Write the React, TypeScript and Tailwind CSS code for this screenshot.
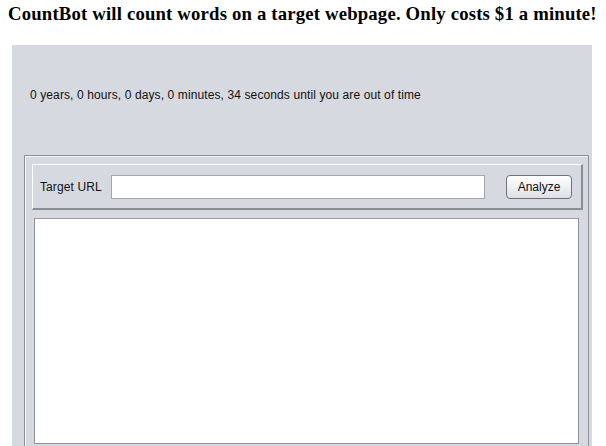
export default function App() {
  return (
    <div className="w-[606px] h-[446px] overflow-hidden bg-white">
      <h1
        className="pl-[8px] pt-[3px] h-[45px] leading-[22px] text-[18.72px] tracking-[0.18px] font-bold text-black whitespace-nowrap"
        style={{ fontFamily: '"Liberation Serif", "Times New Roman", serif' }}
      >
        CountBot will count words on a target webpage. Only costs $1 a minute!
      </h1>
      <div
        className="ml-[12px] w-[580px] h-[401px] bg-[#d6d9df] flex flex-col text-[12px] text-[#111]"
        style={{ fontFamily: '"Liberation Sans", Arial, sans-serif' }}
      >
        <p className="pl-[18px] pt-[43px] leading-[14px] h-[110px] tracking-[0.11px] whitespace-nowrap">
          0 years, 0 hours, 0 days, 0 minutes, 34 seconds until you are out of time
        </p>
        <div className="ml-[12px] w-[565px] flex-1 border-t border-l border-r border-[#8e9197] shadow-[inset_1px_1px_0_#f4f5f7] pl-[7px] pr-[5px] pt-[8px] flex flex-col">
          <div className="h-[46px] flex items-center border-t border-l border-white border-r-2 border-b-2 border-r-[#8a8d93] border-b-[#8a8d93] pl-[7px] pr-[9px]">
            <span className="w-[71px] tracking-[0.1px]">Target URL</span>
            <div className="w-[374px] h-[24px] bg-white border border-[#a3a7ad]" />
            <div className="ml-auto w-[66px] h-[24px] rounded-[4px] border border-[#6f7379] bg-gradient-to-b from-white to-[#dde0e5] flex items-center justify-center shadow-[inset_0_1px_0_#fff]">
              Analyze
            </div>
          </div>
          <div className="mt-[8px] ml-[2px] mr-[4px] h-[226px] bg-white border border-[#8f9298] border-t-[#9a9da3]" />
        </div>
      </div>
    </div>
  );
}
